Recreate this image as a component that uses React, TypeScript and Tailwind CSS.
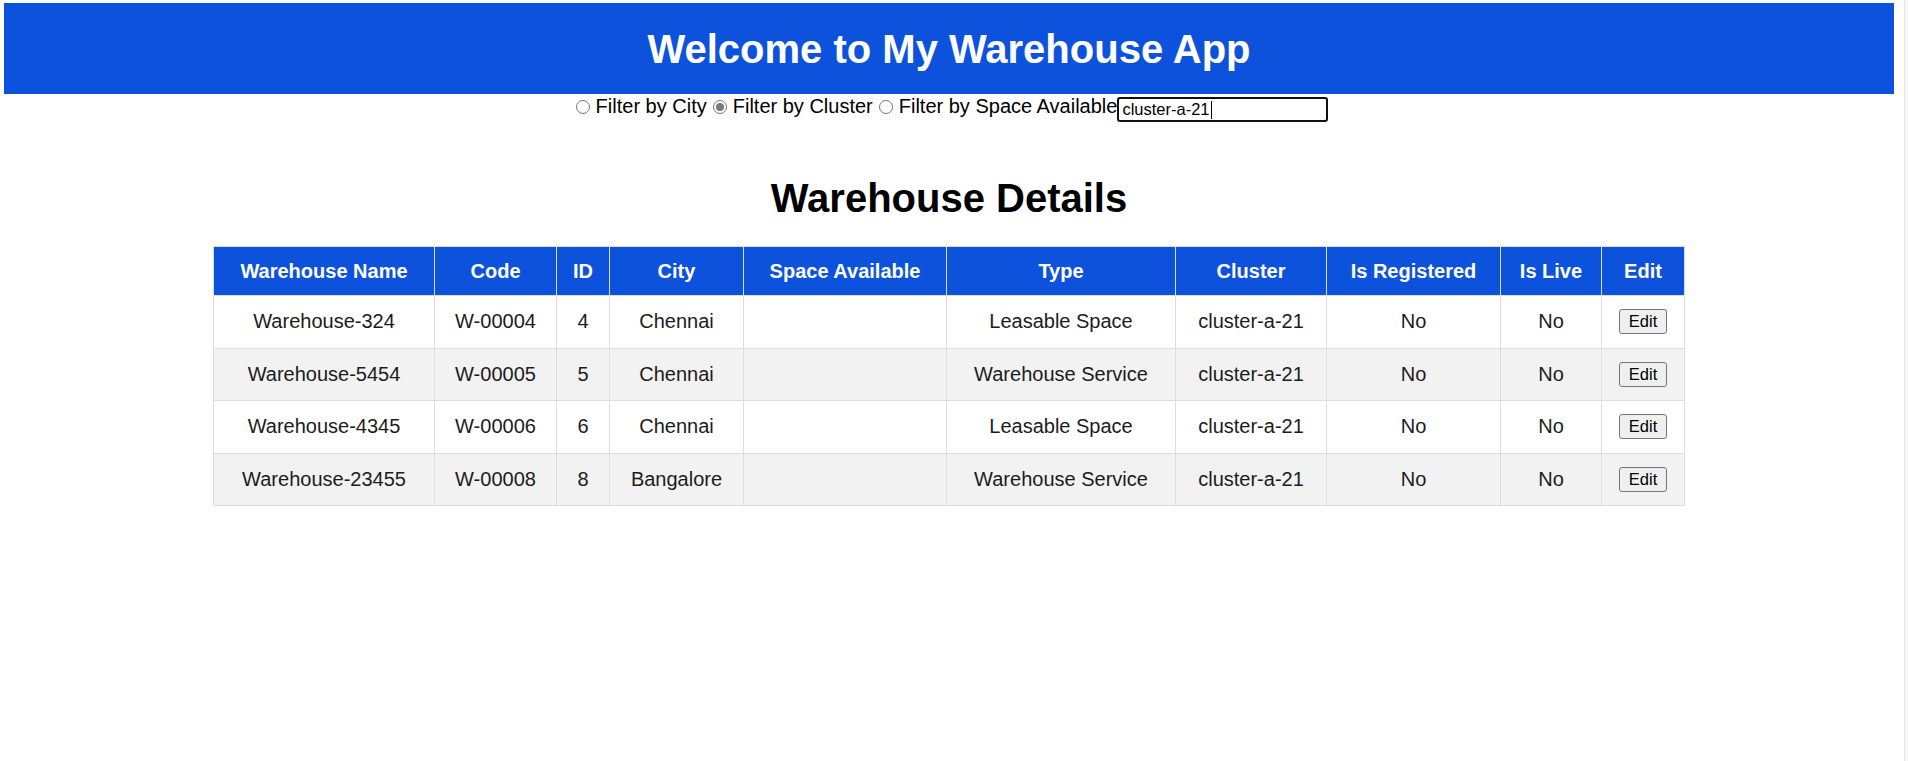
import React from "react";

const rows = [
  { name: "Warehouse-324", code: "W-00004", id: 4, city: "Chennai", space: "", type: "Leasable Space", cluster: "cluster-a-21", reg: "No", live: "No" },
  { name: "Warehouse-5454", code: "W-00005", id: 5, city: "Chennai", space: "", type: "Warehouse Service", cluster: "cluster-a-21", reg: "No", live: "No" },
  { name: "Warehouse-4345", code: "W-00006", id: 6, city: "Chennai", space: "", type: "Leasable Space", cluster: "cluster-a-21", reg: "No", live: "No" },
  { name: "Warehouse-23455", code: "W-00008", id: 8, city: "Bangalore", space: "", type: "Warehouse Service", cluster: "cluster-a-21", reg: "No", live: "No" },
];

const cols = [
  { label: "Warehouse Name", w: "w-[221px]" },
  { label: "Code", w: "w-[122px]" },
  { label: "ID", w: "w-[53px]" },
  { label: "City", w: "w-[134px]" },
  { label: "Space Available", w: "w-[203px]" },
  { label: "Type", w: "w-[229px]" },
  { label: "Cluster", w: "w-[151px]" },
  { label: "Is Registered", w: "w-[174px]" },
  { label: "Is Live", w: "w-[101px]" },
  { label: "Edit", w: "w-[83px]" },
];

function Radio({ checked }: { checked?: boolean }) {
  return (
    <span className="ml-[6px] mr-[6px] mt-[6px] flex h-[14px] w-[14px] shrink-0 items-center justify-center rounded-full border border-[#767676] bg-white">
      {checked ? <span className="h-[8px] w-[8px] rounded-full bg-[#7a7a7a]" /> : null}
    </span>
  );
}

export default function App() {
  return (
    <div className="flex min-h-[761px] w-full bg-white" style={{ fontFamily: '"Liberation Sans", Arial, sans-serif' }}>
      <div className="flex-1">
        <div className="ml-[4px] mr-[10px] pt-[3px]">
          <header className="flex h-[91px] items-center justify-center bg-[#0d52dc]">
            <h1 className="text-[40px] font-bold leading-[46px] text-white">Welcome to My Warehouse App</h1>
          </header>

          <div className="flex h-[28px] items-start justify-center text-[20px] leading-[23px] text-black">
            <Radio />
            <span className="mt-[1px] whitespace-pre">Filter by City</span>
            <Radio checked />
            <span className="mt-[1px] whitespace-pre">Filter by Cluster</span>
            <Radio />
            <span className="mt-[1px] whitespace-pre">Filter by Space Available</span>
            <div className="mt-[3px] flex h-[25px] w-[211px] items-center rounded-[3px] border-2 border-[#101010] bg-white pl-[3px] text-[16.5px] leading-[19px] text-black">
              <span>cluster-a-21</span>
              <span className="ml-[1px] h-[18px] w-[1px] bg-black" />
            </div>
          </div>

          <h2 className="mt-[53px] text-center text-[40px] font-bold leading-[46px] text-black">Warehouse Details</h2>

          <div className="mt-[25px] flex justify-center">
            <table className="w-[1471px] table-fixed border-collapse text-[20px] leading-[23px] text-[#1c1c1c]">
              <thead>
                <tr className="bg-[#0d52dc]">
                  {cols.map((c) => (
                    <th key={c.label} className={`${c.w} h-[49px] border border-[#dddddd] px-[12px] text-center font-bold text-white`}>
                      {c.label}
                    </th>
                  ))}
                </tr>
              </thead>
              <tbody>
                {rows.map((r, i) => (
                  <tr key={r.code} className={i % 2 === 1 ? "bg-[#f2f2f2]" : "bg-white"}>
                    <td className="h-[52.5px] border border-[#dddddd] px-[12px] text-center">{r.name}</td>
                    <td className="border border-[#dddddd] px-[12px] text-center">{r.code}</td>
                    <td className="border border-[#dddddd] px-[12px] text-center">{r.id}</td>
                    <td className="border border-[#dddddd] px-[12px] text-center">{r.city}</td>
                    <td className="border border-[#dddddd] px-[12px] text-center">{r.space}</td>
                    <td className="border border-[#dddddd] px-[12px] text-center">{r.type}</td>
                    <td className="border border-[#dddddd] px-[12px] text-center">{r.cluster}</td>
                    <td className="border border-[#dddddd] px-[12px] text-center">{r.reg}</td>
                    <td className="border border-[#dddddd] px-[12px] text-center">{r.live}</td>
                    <td className="border border-[#dddddd] px-[4px] text-center">
                      <button className="inline-flex h-[25px] items-center rounded-[3px] border border-[#767676] bg-[#efefef] px-[9px] text-[16.5px] leading-[19px] text-black">
                        Edit
                      </button>
                    </td>
                  </tr>
                ))}
              </tbody>
            </table>
          </div>
        </div>
      </div>
      <div className="w-[4px] border-l border-[#e6e6e6] bg-[#f7f7f7]" />
    </div>
  );
}
